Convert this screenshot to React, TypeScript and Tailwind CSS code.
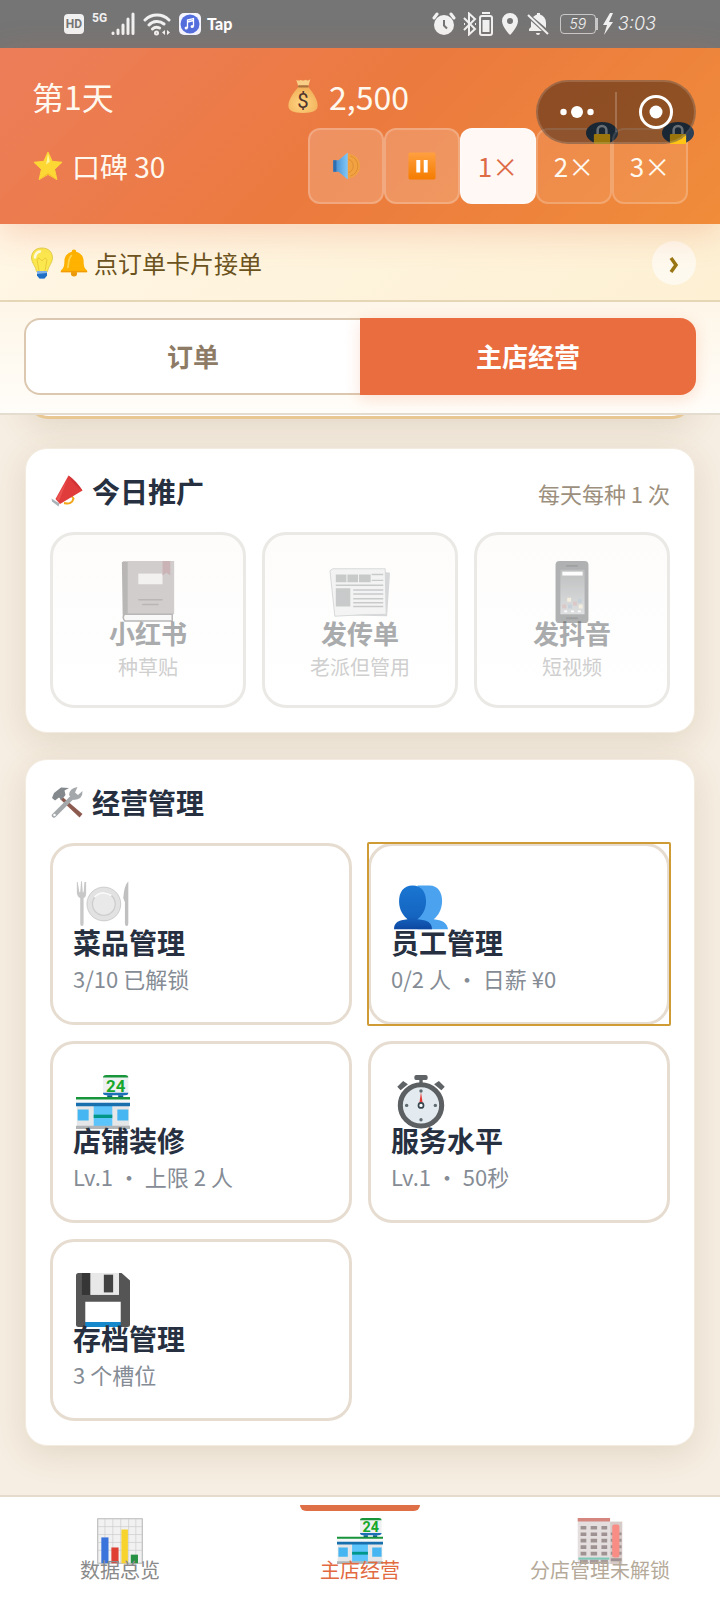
import type { ReactNode } from "react";
import clsx from "clsx";

type EmojiProps = { className?: string; children: ReactNode };

function Emoji({ className, children }: EmojiProps) {
  return (
    <svg viewBox="0 0 64 64" className={clsx("shrink-0", className)} aria-hidden="true">
      {children}
    </svg>
  );
}

function MoneyBag({ className }: { className?: string }) {
  return (
    <Emoji className={className}>
      <defs>
        <radialGradient id="bag" cx="45%" cy="65%" r="60%">
          <stop offset="0" stopColor="#ffd583" />
          <stop offset="1" stopColor="#f3b35c" />
        </radialGradient>
      </defs>
      <path d="M20 3q5 3 8 0q4 3 8 0q4 3 9-1l-4 14H24z" fill="#f9cf87" />
      <path d="M24 16h17c7 8 17 21 17 33 0 10-9 13-26 13S6 59 6 49c0-12 11-25 18-33z" fill="url(#bag)" />
      <rect x="23" y="13" width="19" height="4" rx="2" fill="#a9713c" />
      <text x="32" y="53" textAnchor="middle" fontSize="36" fontFamily="Roboto, sans-serif" fill="#4e342e">
        $
      </text>
    </Emoji>
  );
}

function Star({ className }: { className?: string }) {
  return (
    <Emoji className={className}>
      <path d="M32 2l9 20 21 2-16 15 5 22-19-11-19 11 5-22L2 24l21-2z" fill="#fdd835" stroke="#fdd835" strokeWidth="2" strokeLinejoin="round" />
      <path d="M32 6l4 17-8 6z" fill="#fff59d" />
      <path d="M51 61L32 50 13 61l19-14z" fill="#f7b92f" />
    </Emoji>
  );
}

function Speaker({ className }: { className?: string }) {
  return (
    <Emoji className={className}>
      <defs>
        <linearGradient id="cone" x1="0" x2="1">
          <stop offset="0" stopColor="#3c86c9" />
          <stop offset="1" stopColor="#82c9f8" />
        </linearGradient>
      </defs>
      <path d="M36 14a19 19 0 010 36zM36 4a28 28 0 010 56" fill="#f2a240" />
      <path d="M38 17a16 16 0 010 30M42 9a24 24 0 010 46" fill="none" stroke="#dc8a34" strokeWidth="2" />
      <path d="M3 19h12L36 1v62L15 45H3z" fill="url(#cone)" />
      <path d="M3 19h7v26H3z" fill="#2f6fb0" />
    </Emoji>
  );
}

function Pause({ className }: { className?: string }) {
  return (
    <Emoji className={className}>
      <defs>
        <linearGradient id="pause" x1="0" x2="0" y1="0" y2="1">
          <stop offset="0" stopColor="#ffa040" />
          <stop offset="1" stopColor="#f57c00" />
        </linearGradient>
      </defs>
      <rect x="1" y="1" width="62" height="62" rx="4" fill="url(#pause)" />
      <path d="M19 18h9v29h-9zM36 18h9v29h-9z" fill="#fff" />
    </Emoji>
  );
}

function Lock({ className }: { className?: string }) {
  return (
    <Emoji className={className}>
      <path d="M18 34V20a14 14 0 0128 0v14" fill="none" stroke="#aebac2" strokeWidth="8" />
      <rect x="6" y="32" width="52" height="32" rx="3" fill="#ffc414" />
    </Emoji>
  );
}

function Bulb({ className }: { className?: string }) {
  return (
    <Emoji className={className}>
      <path d="M32 2c14 0 21 9 21 20 0 10-9 17-10 27H21C20 39 11 32 11 22 11 11 18 2 32 2z" fill="#fbe94f" stroke="#d9c33c" strokeWidth="1.500" />
      <path d="M26 48L22 25q4-6 7 0 3 5 6 0 3-6 7 0l-4 23" fill="none" stroke="#eccb3c" strokeWidth="2" />
      <path d="M18 21q1-11 10-12" fill="none" stroke="#fffde7" strokeWidth="5" strokeLinecap="round" />
      <path d="M22 48h20v9l-5 6H27l-5-6z" fill="#82b1e8" />
      <path d="M22 54l20-2v5l-5 6H27l-5-6z" fill="#1f6fc4" />
    </Emoji>
  );
}

function Bell({ className }: { className?: string }) {
  return (
    <Emoji className={className}>
      <circle cx="32" cy="56" r="7" fill="#e99a0c" />
      <path d="M32 1c3 0 5 2 5 5 11 3 17 11 17 22 0 13 3 17 8 21v4H2v-4c5-4 8-8 8-21C10 17 16 9 27 6c0-3 2-5 5-5z" fill="#ffb300" />
      <path d="M18 42c2-7 0-19 8-27" fill="none" stroke="#ffd54f" strokeWidth="4" strokeLinecap="round" />
      <path d="M2 50h60v3H2z" fill="#f19a0a" />
    </Emoji>
  );
}

function Megaphone({ className }: { className?: string }) {
  return (
    <Emoji className={className}>
      <path d="M26 56q16 4 19-9l-4-5" fill="none" stroke="#f2a71b" strokeWidth="4" />
      <path d="M1 47l16 10-2 6-13-10z" fill="#a9b3b8" />
      <path d="M35 1q5 4 13 12 11 12 15 18L18 58 9 48z" fill="#e03c3c" />
      <path d="M35 1q14 9 28 30-17-8-28-30z" fill="#d23434" />
      <path d="M33 8L11 48l5 4z" fill="#ec524f" />
    </Emoji>
  );
}

function Tools({ className }: { className?: string }) {
  return (
    <Emoji className={className}>
      <path d="M22 21l41 35-6 7L18 26z" fill="#8d5a50" />
      <path d="M2 24L6 14 20 3l16 1-9 5 2 9-8 10-5-5-8 6z" fill="#83898d" />
      <path d="M6 59l37-37" fill="none" stroke="#a4a8ab" strokeWidth="9" strokeLinecap="round" />
      <path d="M36 18q1-14 17-16l-5 11 6 5 9-8q1 17-18 18z" fill="#a4a8ab" />
      <circle cx="7" cy="58" r="2.500" fill="#fff" />
    </Emoji>
  );
}

function Book({ className }: { className?: string }) {
  return (
    <Emoji className={className}>
      <path d="M6 0h53v55H6z" fill="#a39394" />
      <path d="M5 1h6v59H6z" fill="#6b6061" />
      <path d="M7 55h50v7H8q-3-4 0-7z" fill="#f3f4f5" stroke="#6b6061" strokeWidth="1.500" />
      <path d="M22 13h25v11H22z" fill="#e7e2e2" />
      <path d="M22 40h25M26 45h17" stroke="#6b6061" strokeWidth="1.500" />
      <path d="M47 0h8v15l-4-3-4 3z" fill="#b5505e" />
    </Emoji>
  );
}

function Newspaper({ className }: { className?: string }) {
  return (
    <Emoji className={className}>
      <path d="M56 11l7 1-3 45-50-1z" fill="#a3acb0" />
      <path d="M1 10l3-2h54l1 47q-24 0-53 2z" fill="#e6e8ea" stroke="#a3acb0" />
      <path d="M7 14h11v8H7zM19 14h11v8H19zM31 14h12v8H31zM7 28h15v19H7z" fill="#868e92" />
      <path d="M44 14h12M44 20h12M7 25h49M25 30h31M25 34h31M25 39h31M25 43h31M25 47h31" stroke="#868e92" strokeWidth="1.500" />
    </Emoji>
  );
}

function Phone({ className }: { className?: string }) {
  return (
    <Emoji className={className}>
      <defs>
        <linearGradient id="screen" x1="0" x2="0" y1="0" y2="1">
          <stop offset="0" stopColor="#6f777b" />
          <stop offset="1" stopColor="#b5bdc1" />
        </linearGradient>
      </defs>
      <rect x="15" y="0" width="34" height="64" rx="4" fill="#50585c" />
      <rect x="20" y="9" width="25" height="46" fill="url(#screen)" />
      <path d="M22 11h21v4H22z" fill="#fff" />
      <path d="M26 5h12M26 59h12" stroke="#2c3134" strokeWidth="2" />
      <path d="M27 38h4v4h-4zM39 45h4v4h-4z" fill="#f3dc9a" />
      <path d="M33 42h4v4h-4zM22 45h4v4h-4z" fill="#d47d76" />
      <path d="M38 39h4v4h-4zM28 45h4v4h-4z" fill="#709fc4" />
      <path d="M24 52h3M31 52h3M38 52h3" stroke="#fff" strokeWidth="2" />
    </Emoji>
  );
}

function Plate({ className }: { className?: string }) {
  return (
    <Emoji className={className}>
      <circle cx="33" cy="32" r="20" fill="#e2e2e2" stroke="#c6c6c6" />
      <circle cx="33" cy="32" r="13.500" fill="#e9e9e9" stroke="#cdcdcd" strokeWidth="1.500" />
      <path d="M22 24q8-9 20-2" fill="none" stroke="#fafafa" strokeWidth="2" />
      <path d="M1 6v13q1 5 4 6v30q0 3 2 3t2-3V25q3-1 3-6V6h-2l-1 12H8L7 5H6L5 18H4L2 6z" fill="#c8c8c8" />
      <path d="M62 5q-5 5-6 20l2 5v25q0 3 2 3t2-3z" fill="#c0c0c0" />
    </Emoji>
  );
}

function People({ className }: { className?: string }) {
  return (
    <Emoji className={className}>
      <defs>
        <linearGradient id="front" x1="0" x2="0" y1="0" y2="1">
          <stop offset="0" stopColor="#1976d2" />
          <stop offset="0.7" stopColor="#1565c0" />
          <stop offset="1" stopColor="#0d47a1" />
        </linearGradient>
      </defs>
      <path d="M42 10c10 0 15 8 15 18 0 11-5 18-10 22 10 1 16 4 17 12H28V10z" fill="#4ba3ef" />
      <path d="M22 10c11 0 16 8 16 19 0 10-5 17-10 21 12 1 17 4 17 12H0c0-8 5-11 16-12C11 46 6 39 6 29 6 18 11 10 22 10z" fill="url(#front)" />
    </Emoji>
  );
}

function Store({ className }: { className?: string }) {
  return (
    <Emoji className={className}>
      <path d="M37 20h6v8h-6zM50 20h6v8h-6z" fill="#0a5a8c" />
      <rect x="32" y="0" width="30" height="24" rx="3" fill="#eef0f1" />
      <path d="M32 3q0-3 4-3h22q4 0 4 3z" fill="#18953a" />
      <path d="M32 21h30q0 3-4 3H36q-4 0-4-3z" fill="#1a6fb5" />
      <text x="47" y="20" textAnchor="middle" fontSize="20" fontWeight="700" fontFamily="Roboto, sans-serif" fill="#16a72b">
        24
      </text>
      <path d="M1 36h62v27H1z" fill="#e4e6e8" />
      <path d="M2 41h13v13H2zM49 41h13v13H49z" fill="#45b6f2" />
      <path d="M21 36h22v25H21z" fill="#5bc5fb" />
      <path d="M21 47h22v4H21z" fill="#009688" />
      <path d="M0 26h64v4H0z" fill="#18953a" />
      <path d="M0 29h64v5H0z" fill="#f4f6f7" />
      <path d="M0 33h64v4H0z" fill="#176fae" />
      <path d="M0 60h64v4H0z" fill="#b0b4b6" />
    </Emoji>
  );
}

function Stopwatch({ className }: { className?: string }) {
  return (
    <Emoji className={className}>
      <path d="M26 0h12q2 0 2 3t-2 3h-4v4h-4V6h-4q-2 0-2-3t2-3z" fill="#5f6366" />
      <path d="M8 16l-2-2 5-5 3 2zM56 16l2-2-5-5-3 2z" fill="#5f6366" stroke="#5f6366" strokeWidth="3" />
      <circle cx="32" cy="36" r="24.500" fill="#e3ebf0" stroke="#5d6063" strokeWidth="6" />
      <path d="M32 20l2.500 17h-5z" fill="#e53935" />
      <circle cx="32" cy="36" r="3" fill="#fff" stroke="#37474f" strokeWidth="2" />
      <g fill="#5f6b70">
        <circle cx="32" cy="19" r="2" />
        <circle cx="32" cy="53" r="2" />
        <circle cx="15" cy="36" r="2" />
        <circle cx="49" cy="36" r="2" />
      </g>
    </Emoji>
  );
}

function Floppy({ className }: { className?: string }) {
  return (
    <Emoji className={className}>
      <path d="M3 0h51l10 9v52q0 3-3 3H3q-3 0-3-3V3q0-3 3-3z" fill="#555" />
      <path d="M7 0h10v26H7z" fill="#363636" />
      <path d="M17 0h34v26H17z" fill="#e8e8e8" />
      <path d="M33 2h11v21H33z" fill="#424242" />
      <path d="M11 34h42v24H11z" fill="#fff" />
      <path d="M11 58h42v6H11z" fill="#1689cc" />
    </Emoji>
  );
}

function Chart({ className }: { className?: string }) {
  return (
    <Emoji className={className}>
      <path d="M1 1h62v62H1z" fill="#f1f1f1" stroke="#b8b8b8" strokeWidth="1.500" />
      <path d="M11 1v62M22 1v62M33 1v62M44 1v62M54 1v62M1 12h62M1 23h62M1 34h62M1 45h62" stroke="#cdcdcd" />
      <path d="M6 27h10v36H6z" fill="#3b73dc" />
      <path d="M20 41h10v22H20z" fill="#df4031" />
      <path d="M34 16h9v47h-9z" fill="#f7d32e" />
      <path d="M47 51h10v12H47z" fill="#279144" />
    </Emoji>
  );
}

function Building({ className }: { className?: string }) {
  const rows = [11, 20, 29, 38, 47];
  return (
    <Emoji className={className}>
      <path d="M46 5h17v59H46z" fill="#bcaaa4" />
      <path d="M1 1h45v63H1z" fill="#d3cbc9" />
      <path d="M1 0h45v5H1z" fill="#b8362b" />
      {rows.map((y) => (
        <path key={y} d={`M5 ${y}h8v5H5zM19 ${y}h9v5h-9zM34 ${y}h8v5h-8zM47 ${y + 9}h15v4H47z`} fill="#5e4c4a" />
      ))}
      <path d="M2 55h43v3H2z" fill="#2aa58c" />
      <path d="M4 58h11v6H4zM18 58h12v6H18zM33 58h10v6H33z" fill="#6d5c5a" />
      <rect x="49" y="9" width="10" height="46" rx="3" fill="#f44336" />
    </Emoji>
  );
}

function StatusBar() {
  return (
    <div className="flex h-12 items-center justify-between bg-[#757575] pl-16 pr-16 text-white/90">
      <div className="flex items-center gap-1">
        <span className="flex h-5 w-5 items-center justify-center rounded-sm bg-white/90 font-['Roboto',sans-serif] text-xs font-bold text-[#757575]">
          HD
        </span>
        <span className="ml-1 self-start font-['Roboto',sans-serif] text-xs leading-3 font-bold">5G</span>
        <svg viewBox="0 0 24 24" className="h-6 w-6" fill="none" stroke="currentColor" strokeWidth="3" strokeLinecap="round">
          <path d="M2 21v.5M7 18v3.500M12 13v8.500M17 7v14.500M22 2v19.500" />
        </svg>
        <svg viewBox="0 0 28 24" className="ml-1 h-6 w-7" fill="none" stroke="currentColor" strokeWidth="3" strokeLinecap="round">
          <path d="M2 8a17 17 0 0124 0M6 13a11 11 0 0115-1M9.500 17a6 6 0 017-1" />
          <circle cx="13.500" cy="21" r="1" />
          <path d="M22 18v5l-3-2.500zM24 18v5l3-2.500z" fill="currentColor" stroke="none" />
        </svg>
        <svg viewBox="0 0 22 22" className="ml-1 h-[22px] w-[22px]">
          <rect width="22" height="22" rx="5" fill="#f4f5ff" />
          <circle cx="11" cy="11" r="9.500" fill="#536ede" />
          <path d="M8.500 15V7l6-1.500v8M8.500 9l6-1.500" fill="none" stroke="#fff" strokeWidth="1.300" />
          <circle cx="7.200" cy="15" r="1.600" fill="#fff" />
          <circle cx="13.200" cy="13.500" r="1.600" fill="#fff" />
        </svg>
        <span className="ml-0.5 font-['Lato',sans-serif] text-base leading-4 font-black text-white">Tap</span>
      </div>
      <div className="flex items-center gap-1.5">
        <svg viewBox="0 0 24 24" className="h-6 w-6" fill="currentColor">
          <path d="M2 6l3-4M22 6l-3-4" stroke="currentColor" strokeWidth="3" strokeLinecap="round" />
          <circle cx="12" cy="13" r="10" />
          <path d="M12 8v5.500l3 3" fill="none" stroke="#757575" strokeWidth="2" />
        </svg>
        <svg viewBox="0 0 32 24" className="h-6 w-8" fill="none" stroke="currentColor" strokeWidth="2">
          <path d="M2 6l11 11-6 5.500V1.500L13 7 2 18M2 12h1M13 12h1" />
          <rect x="18" y="4" width="12" height="19" rx="2" />
          <path d="M20 1h8" />
          <path d="M20.500 8h7v12h-7z" fill="currentColor" stroke="none" />
        </svg>
        <svg viewBox="0 0 18 24" className="h-6 w-5" fill="currentColor">
          <path fillRule="evenodd" d="M9 1a8 8 0 00-8 8c0 6 8 14 8 14s8-8 8-14a8 8 0 00-8-8zm0 5a3 3 0 110 6 3 3 0 010-6z" />
        </svg>
        <svg viewBox="0 0 24 24" className="h-6 w-6" fill="currentColor">
          <path d="M7 5q2-2 4-2.500V1h3v1.500q6 2 6 8.500V16zM3 19V17l2-2V9l11 10zM10 21h4q0 2-2 2t-2-2z" />
          <path d="M2 3l20 19" stroke="currentColor" strokeWidth="2" />
        </svg>
        <span className="ml-1 flex items-center">
          <span className="flex h-5 w-9 items-center justify-center rounded-sm border border-white/60 font-['Inter',sans-serif] text-sm font-light italic">
            59
          </span>
          <span className="h-3 w-0.5 bg-white/60" />
          <svg viewBox="0 0 12 24" className="ml-1 h-6 w-3" fill="currentColor">
            <path d="M8 1L1 13h4l-3 10 9-13H7l4-9z" />
          </svg>
          <span className="ml-1 font-['Inter',sans-serif] text-lg leading-6 font-light italic">3:03</span>
        </span>
      </div>
    </div>
  );
}

const SPEED_BUTTON =
  "relative flex h-[76px] w-[76px] items-center justify-center rounded-xl border-2 border-white/20 text-[26px] leading-8";

function LockBadge() {
  return (
    <span className="absolute -top-2 -right-2 flex h-[22px] w-8 justify-center rounded-[50%] bg-[#2b4056]">
      <Lock className="h-6 w-5" />
    </span>
  );
}

function Header() {
  return (
    <header className="relative z-20 bg-linear-135 from-[#ed7d59] via-[#eb7a3e] to-[#f08c3a] px-8 py-5 text-[#fff8ee] shadow-[0_8px_32px_rgba(233,109,62,0.25)]">
      <div className="grid h-15 grid-cols-[253px_1fr] items-center pb-1 text-[32px] leading-10">
        <span>第1天</span>
        <span className="flex items-center gap-2">
          <MoneyBag className="h-9 w-9" />
          2,500
        </span>
      </div>
      <div className="flex items-center justify-between">
        <span className="flex items-center gap-2 text-[28px] leading-9">
          <Star className="h-[30px] w-8" />
          口碑 30
        </span>
        <div className="flex">
          <button className={clsx(SPEED_BUTTON, "bg-white/18")} aria-label="声音">
            <Speaker className="h-7 w-7" />
          </button>
          <button className={clsx(SPEED_BUTTON, "bg-white/18")} aria-label="暂停">
            <Pause className="h-7 w-7" />
          </button>
          <button className={clsx(SPEED_BUTTON, "bg-[#fff8f5] text-[#dd6b47]")}>1×</button>
          <button className={clsx(SPEED_BUTTON, "bg-white/8")}>
            2×
            <LockBadge />
          </button>
          <button className={clsx(SPEED_BUTTON, "bg-white/8")}>
            3×
            <LockBadge />
          </button>
        </div>
      </div>

      {/* mini-program capsule floats over the header */}
      <div className="absolute top-8 right-6 flex h-16 w-40 items-center rounded-full border-2 border-white/15 bg-black/40">
        <button className="flex flex-1 justify-center" aria-label="更多">
          <svg viewBox="0 0 34 12" className="h-3 w-[34px]" fill="#fff">
            <circle cx="3.500" cy="6" r="3.200" />
            <circle cx="17" cy="6" r="6" />
            <circle cx="30.500" cy="6" r="3.200" />
          </svg>
        </button>
        <span className="h-10 w-0.5 bg-white/20" />
        <button className="flex flex-1 justify-center" aria-label="关闭">
          <svg viewBox="0 0 36 36" className="h-9 w-9">
            <circle cx="18" cy="18" r="15.500" fill="none" stroke="#fff" strokeWidth="3" />
            <circle cx="18" cy="18" r="6.500" fill="#fff" />
          </svg>
        </button>
      </div>
    </header>
  );
}

function TipBar() {
  return (
    <div className="flex h-[78px] items-center border-b-2 border-[#e5d7b5] bg-linear-135 from-[#fff6e4] to-[#fdf0d3] px-6 pt-0.5">
      <Bulb className="h-8 w-9" />
      <Bell className="h-7 w-7" />
      <p className="flex-1 pl-1.5 text-2xl leading-8 text-[#6b5320]">点订单卡片接单</p>
      <button className="flex h-11 w-11 items-center justify-center rounded-full bg-white/60 pt-1" aria-label="展开">
        <svg viewBox="0 0 10 18" className="h-[18px] w-[10px]">
          <path d="M2 2l5 7-5 7" fill="none" stroke="#9a7514" strokeWidth="3.500" />
        </svg>
      </button>
    </div>
  );
}

function Tabs() {
  return (
    <div className="relative z-10 border-b-2 border-[#e3dccf] bg-linear-to-b from-[#fef6e8] to-[#fffdf9] px-6 pt-4 pb-[18px]">
      <div className="grid h-[77px] grid-cols-2 text-[26px] leading-9 font-bold">
        <button className="rounded-l-2xl border-2 border-r-0 border-[#dcc8b0] bg-white pb-0.5 text-[#8d7b66]">订单</button>
        <button className="rounded-r-2xl bg-[#e96d3e] pb-0.5 text-white shadow-[0_4px_16px_rgba(233,109,62,0.2)]">
          主店经营
        </button>
      </div>
    </div>
  );
}

type CardProps = { icon: ReactNode; title: string; note?: string; children: ReactNode };

function Card({ icon, title, note, children }: CardProps) {
  return (
    <section className="rounded-[22px] border border-[#f3ebdf] bg-white p-6 shadow-[0_8px_32px_rgba(120,85,50,0.15)]">
      <div className="mb-[23px] flex h-9 items-center justify-between">
        <h2 className="flex items-center gap-2 text-[28px] leading-9 font-bold text-[#263040]">
          {icon}
          {title}
        </h2>
        {note && <span className="pt-1 text-[22px] leading-8 text-[#9c8f7d]">{note}</span>}
      </div>
      {children}
    </section>
  );
}

const promotions = [
  { name: "小红书", desc: "种草贴", Icon: Book },
  { name: "发传单", desc: "老派但管用", Icon: Newspaper },
  { name: "发抖音", desc: "短视频", Icon: Phone },
];

const managers = [
  { name: "菜品管理", desc: "3/10 已解锁", Icon: Plate },
  { name: "员工管理", desc: "0/2 人 · 日薪 ¥0", Icon: People, focused: true },
  { name: "店铺装修", desc: "Lv.1 · 上限 2 人", Icon: Store },
  { name: "服务水平", desc: "Lv.1 · 50秒", Icon: Stopwatch },
  { name: "存档管理", desc: "3 个槽位", Icon: Floppy },
];

const navItems = [
  { name: "数据总览", Icon: Chart, color: "text-[#8a8a8a]", iconClass: "" },
  { name: "主店经营", Icon: Store, color: "text-[#e26a41]", iconClass: "", active: true },
  { name: "分店管理未解锁", Icon: Building, color: "text-[#b5aa9a]", iconClass: "opacity-60" },
];

export default function App() {
  return (
    <div className="flex min-h-screen flex-col bg-[#f6eee2] font-['Noto_Sans_CJK_SC',sans-serif]">
      <StatusBar />
      <Header />
      <TipBar />
      <Tabs />

      <main className="flex-1 overflow-hidden px-[25px] pb-[49px]">
        {/* previous card, scrolled up under the tabs */}
        <div className="-mt-16 mb-[29px] h-[68px] rounded-3xl border-3 border-[#e8c792] bg-white shadow-[0_8px_32px_rgba(120,85,50,0.15)]" />

        <div className="flex flex-col gap-[26px]">
          <Card icon={<Megaphone className="h-8 w-[34px]" />} title="今日推广" note="每天每种 1 次">
            <div className="grid grid-cols-3 gap-4">
              {promotions.map(({ name, desc, Icon }) => (
                <button
                  key={name}
                  disabled
                  className="flex h-44 flex-col items-center justify-center rounded-3xl border-3 border-[#ebe9e6] bg-linear-to-b from-[#fdfcfb] to-white"
                >
                  <Icon className="h-[62px] w-[62px] opacity-45 saturate-50" />
                  <span className="-mt-1 text-[26px] leading-7 font-bold text-[#a9abad]">{name}</span>
                  <span className="mt-2 text-xl leading-6 text-[#cfcfcf]">{desc}</span>
                </button>
              ))}
            </div>
          </Card>

          <Card icon={<Tools className="h-8 w-[34px]" />} title="经营管理">
            <div className="grid grid-cols-2 gap-4">
              {managers.map(({ name, desc, Icon, focused }) => (
                <button
                  key={name}
                  className="relative flex h-[182px] flex-col justify-center rounded-3xl border-3 border-[#e6dcd0] bg-white px-5 text-left"
                >
                  <Icon className="ml-[3px] h-[54px] w-[54px]" />
                  <span className="-mt-[5px] text-[28px] leading-8 font-bold text-[#263040]">{name}</span>
                  <span className="mt-1.5 text-[22px] leading-7 text-[#858c95]">{desc}</span>
                  {focused && <span className="absolute -inset-1 rounded-xs border-2 border-[#cf9b35]" />}
                </button>
              ))}
            </div>
          </Card>
        </div>
      </main>

      <nav className="grid grid-cols-3 border-t-2 border-[#e6dccd] bg-white pt-2 pb-5">
        {navItems.map(({ name, Icon, color, iconClass, active }) => (
          <button key={name} className={clsx("relative flex flex-col items-center pt-[13px]", color)}>
            {active && <span className="absolute top-0 h-1.5 w-30 rounded-b-md bg-[#de6f47]" />}
            <Icon className={clsx("h-[46px] w-[46px]", iconClass)} />
            <span className="relative -mt-1 text-xl leading-5">{name}</span>
          </button>
        ))}
      </nav>
    </div>
  );
}
